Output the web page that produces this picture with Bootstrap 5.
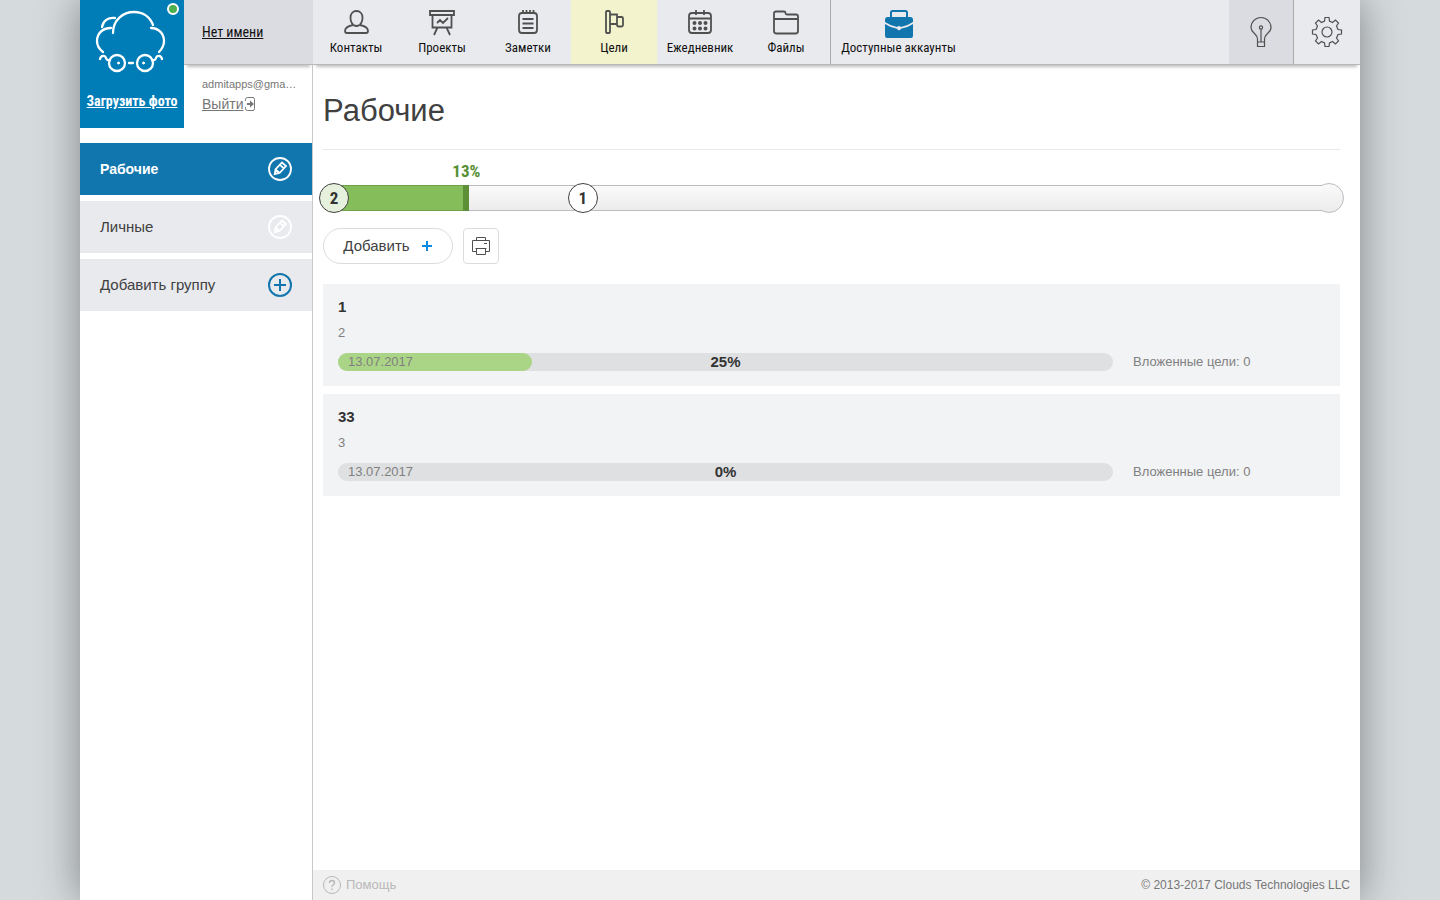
<!DOCTYPE html>
<html lang="ru">
<head>
<meta charset="utf-8">
<meta name="viewport" content="width=device-width, initial-scale=1">
<title>Цели</title>
<link href="https://cdn.jsdelivr.net/npm/bootstrap@5.3.0/dist/css/bootstrap.min.css" rel="stylesheet">
<style>
  :root { --brand: #1276ae; --cond: "Roboto Condensed", "Liberation Sans Narrow", "Liberation Sans", sans-serif; }
  body { background: #d5dadd; font: 13px/20px "Liberation Sans", Arial, sans-serif; color: #404040; }
  svg { display: block; fill: none; stroke: #505050; }
  .shell { max-width: 1280px; box-shadow: 0 0 40px rgba(0,0,0,.4); }
  .side { width: 233px; border-right: 1px solid #c8c8ca; }
  .topbar { height: 65px; border-bottom: 1px solid #b8b8ba; box-shadow: 0 5px 3px -3px rgba(0,0,0,.25); background: #e9eaee; position: relative; }
  .topbar-user { background: #dbdce1; padding-left: 18px; margin-right: -1px; }
  .condensed { font-family: var(--cond); }
  .user-name { color: #111; font-size: 14px; }
  .user-col { min-width: 0; }
  .avatar-box { width: 104px; height: 128px; background: #007cb7; z-index: 2; }
  .avatar-box svg { stroke: #fff; }
  .avatar-box a { color: #fff; font: bold 14px/16px var(--cond); white-space: nowrap; }
  .online { width: 12px; height: 12px; right: 5px; top: 3px; background: #4caf50; border: 2px solid #fff; }
  .user-info { padding: 9px 14px 0 18px; color: #777; }
  .user-mail { font-size: 11px; white-space: nowrap; }
  .user-info a { color: #777; font-size: 14px; }
  .groups { margin-top: 15px; gap: 6px; }
  .group-row { height: 52px; padding: 0 20px; background: #e9eaee; color: #404040; font-size: 15px; text-decoration: none; border: 0; }
  .group-row.current { background: var(--brand); color: #fff; font-weight: bold; font-size: 14px; }
  .nav-tile { width: 86px; padding-top: 7px; color: #111; font: 13px/16px var(--cond); text-decoration: none; gap: 3px; white-space: nowrap; }
  .nav-tile.current { background: #f3f3cd; }
  .nav-tile.wide { width: 136px; margin-left: 1px; border-left: 1px solid #aaabad; }
  .tool-btn { width: 66px; border: 0; background: transparent; padding: 0; }
  .tool-btn.shade { width: 65px; background: #dbdce1; border-right: 1px solid #aaabad; }
  .content-pad { padding: 0 20px 0 10px; }
  h1 { font-size: 31px; line-height: 40px; padding: 26px 0 18px; margin: 0; border-bottom: 1px solid #e8e8e8; }
  .track-wrap { padding: 35px 11px 0; }
  .track { height: 26px; border: solid #babcc2; border-width: 1px 0; background: linear-gradient(#fafafa, #ececec); }
  .track-fill { height: 26px; top: -1px; left: 0; background: #85bd5b; border: solid #6fa348; border-width: 1px 0; }
  .track-fill::after { content: ""; position: absolute; top: -1px; bottom: -1px; left: 100%; width: 6px; background: #5c8f36; }
  .track-fill span { position: absolute; left: 100%; top: -25px; width: 50px; margin-left: -22px; text-align: center; color: #568f33; font: bold 17px/20px var(--cond); }
  .mark-dot { width: 30px; height: 30px; top: 12px; border: 1px solid #404040; background: #fff; font: bold 17px/1 var(--cond); color: #333; }
  .mark-dot.done { background: #e5f1dc; }
  .mark-dot.finish { border-color: #babcc2; background: linear-gradient(#fafafa, #ececec); clip-path: inset(0 0 0 8px); }
  .actions { gap: 10px; margin: 17px 0 20px; }
  .add-btn { width: 130px; height: 36px; border: 1px solid #dcdcdc; background: #fff; color: #404040; font-size: 15px; gap: 11px; padding: 0; }
  .print-btn { width: 36px; height: 36px; border: 1px solid #dcdcdc; border-radius: 4px; background: #fff; padding: 0; }
  .goal { background: #f2f3f5; padding: 13px 15px 15px; color: #808080; }
  .goal h2 { font: bold 15px/20px "Liberation Sans", sans-serif; color: #333; margin: 0 0 6px; }
  .goal p { margin: 0 0 10px; }
  .goal-line { gap: 20px; }
  .goal-bar { height: 18px; line-height: 18px; background: #dfe0e2; }
  .goal-fill { background: #abd586; }
  .goal-date { left: 10px; }
  .goal-pct { color: #333; font: bold 15px/20px "Liberation Sans", sans-serif; }
  .nested { width: 192px; line-height: 18px; }
  .foot { height: 30px; background: #f0f0f0; padding: 0 10px; color: #777; font-size: 12px; }
  .foot a { color: #b8b8b8; gap: 5px; text-decoration: none; font-size: 13px; }
  .foot svg { stroke: #b8b8b8; }
  .ico-white { stroke: #fff; }
  .ico-brand { stroke: var(--brand); }
  .ico-blue { stroke: #0b8ae0; }
  .ico-exit { stroke: #777; margin-left: 1px; }
</style>
</head>
<body>
<div class="shell mx-auto bg-white d-flex min-vh-100">
  <aside class="side flex-shrink-0">
    <div class="d-flex">
      <div class="avatar-box position-relative flex-shrink-0">
        <svg width="104" height="93" viewBox="0 0 104 93" stroke-width="2.300" stroke-linecap="round">
          <path d="M33 33C33 20 43 12 54 12c9 0 16 5 19 13M35 18C28 17 23 21 22 27M31 28C22 28 17 34 17 41c0 5 2 8 6 11M71 28C79 28 84 34 84 41c0 5-2 8-5 11"/>
          <circle cx="37" cy="63" r="8"/><circle cx="65" cy="63" r="8"/>
          <path d="M49 63h4M20 59c1-4 5-4 6-1q1 3 4 2M82 59c-1-4-5-4-6-1q-1 3-4 2"/>
          <circle cx="38.500" cy="63" r="1" fill="#fff" stroke-width="1"/><circle cx="63.500" cy="63" r="1" fill="#fff" stroke-width="1"/>
        </svg>
        <a href="#" class="d-block text-center">Загрузить фото</a>
        <span class="online position-absolute rounded-circle"></span>
      </div>
      <div class="user-col flex-grow-1">
        <div class="topbar topbar-user d-flex align-items-center"><a href="#" class="user-name condensed">Нет имени</a></div>
        <div class="user-info">
          <div class="user-mail">admitapps@gma…</div>
          <div class="d-flex align-items-center"><a href="#">Выйти</a>
            <svg class="ico-exit" width="12" height="14" viewBox="0 0 12 14"><path d="M1.500 4V2.500Q1.500.500 3.500.500H9Q10.500.500 10.500 2.500V11.500Q10.500 13.500 9 13.500H3.500Q1.500 13.500 1.500 11.500V10"/><path d="M3 6h3V3.500L10 7l-4 3.500V8H3z" fill="#777" stroke="none"/></svg>
          </div>
        </div>
      </div>
    </div>
    <nav class="groups d-flex flex-column">
      <a href="#" class="group-row current d-flex align-items-center justify-content-between">Рабочие
        <svg class="ico-white" width="24" height="24" viewBox="0 0 24 24" stroke-width="1.800"><circle cx="12" cy="12" r="11"/><path d="M6.800 17l.7-4.500 6.500-7 4 3.500-6.500 7zM12 7.800l3.800 3.500M7.500 12.500l4 3.500"/></svg></a>
      <a href="#" class="group-row d-flex align-items-center justify-content-between">Личные
        <svg class="ico-white" width="24" height="24" viewBox="0 0 24 24" stroke-width="1.800"><circle cx="12" cy="12" r="11"/><path d="M6.800 17l.7-4.500 6.500-7 4 3.500-6.500 7zM12 7.800l3.800 3.500M7.500 12.500l4 3.500"/></svg></a>
      <button class="group-row d-flex align-items-center justify-content-between">Добавить группу
        <svg class="ico-brand" width="24" height="24" viewBox="0 0 24 24" stroke-width="2"><circle cx="12" cy="12" r="11"/><path d="M12 6v12M6 12h12"/></svg></button>
    </nav>
  </aside>

  <div class="d-flex flex-column flex-grow-1">
    <header class="topbar d-flex">
      <a href="#" class="nav-tile d-flex flex-column align-items-center">
        <svg width="30" height="30" viewBox="0 0 30 30" stroke-width="1.800"><path d="M18.500 18c1.800-1.500 3-4.300 3-7.500C21.500 6.500 19 4 15.500 4s-6 2.500-6 6.500c0 3.200 1.200 6 3 7.500M12.500 18c-5 .8-8.500 2.500-8.500 6 0 1.200.7 2 2 2h19c1.300 0 2-.8 2-2 0-3.500-3.500-5.200-8.500-6"/><path d="M12.500 18q3 2 6 0"/></svg>Контакты</a>
      <a href="#" class="nav-tile d-flex flex-column align-items-center">
        <svg width="30" height="30" viewBox="0 0 30 30" stroke-width="1.800"><path d="M3 4h24v4H3zM5.500 8v12.500h19V8M10.500 20.500L7 28M19.500 20.500L23 28M10 16l3-3 3 3 5-5"/></svg>Проекты</a>
      <a href="#" class="nav-tile d-flex flex-column align-items-center">
        <svg width="30" height="30" viewBox="0 0 30 30" stroke-width="1.800"><rect x="6" y="6" width="18" height="20" rx="3"/><path d="M10 3v4M13.500 3v4M17 3v4M20.500 3v4M9.500 12h11M9.500 16.500h11M9.500 21h11"/></svg>Заметки</a>
      <a href="#" class="nav-tile current d-flex flex-column align-items-center" aria-current="page">
        <svg width="30" height="30" viewBox="0 0 30 30" stroke-width="1.800"><rect x="7" y="4" width="4" height="22" rx="1"/><path d="M11 7.500h7v9.500H11M18 10h4.500q1.500 0 1.500 1.500V18q0 1.500-1.500 1.500h-3q-1.500 0-1.500-2"/></svg>Цели</a>
      <a href="#" class="nav-tile d-flex flex-column align-items-center">
        <svg width="30" height="30" viewBox="0 0 30 30" stroke-width="1.800"><rect x="4" y="6" width="22" height="20" rx="3"/><path d="M4 11.500h22M11 3v5M19 3v5"/><path d="M9.500 16h.01M15 16h.01M20.500 16h.01M9.500 21.500h.01M15 21.500h.01M20.500 21.500h.01" stroke-width="4" stroke-linecap="round"/></svg>Ежедневник</a>
      <a href="#" class="nav-tile d-flex flex-column align-items-center">
        <svg width="30" height="30" viewBox="0 0 30 30" stroke-width="1.800"><path d="M3 24V6.500Q3 4.500 5 4.500h8q1.500 0 1.500 1.500t1.500 1.500h9q2 0 2 2V24q0 2.500-2.500 2.500h-19Q3 26.500 3 24zM3 12h24"/></svg>Файлы</a>
      <a href="#" class="nav-tile wide d-flex flex-column align-items-center">
        <svg class="overflow-visible" width="30" height="30" viewBox="0 0 30 30"><path class="ico-brand" d="M7 11V5.500Q7 4 8.500 4h13Q23 4 23 5.500V11" stroke-width="2"/><path d="M1 13q0-3 2.500-3h23q2.500 0 2.500 3v2q-6 4-12 5-2-2-4 0-6-1-12-5zM1 17q6 4 12 4.800 2 3 4 0 6-.800 12-4.800v11.500q0 2.500-2 2.500H3q-2 0-2-2.500z" fill="#1276ae" stroke="none"/></svg>Доступные аккаунты</a>
      <button class="tool-btn shade ms-auto d-flex align-items-center justify-content-center" aria-label="Подсказки">
        <svg width="24" height="32" viewBox="0 0 24 32" stroke-width="1.200"><path d="M8.500 26v-3c0-3-1.500-4-3.500-6C3 15.200 2 13.500 2 11.500 2 6 6.500 1.500 12 1.500S22 6 22 11.500c0 2-1 3.700-3 5.500-2 2-3.500 3-3.500 6v3M8.500 26h7v4.500h-7zM12 13v13"/><circle cx="12" cy="11.500" r="1.600"/></svg></button>
      <button class="tool-btn d-flex align-items-center justify-content-center" aria-label="Настройки">
        <svg width="32" height="32" viewBox="-16 -16 32 32" stroke-width="1.200"><circle r="5"/><path d="M-2-14.500H2L2.500-11 5.500-9.500 8.500-12 11.500-9 9.500-6 11-2.500 14.500-2V2L11 2.500 9.500 6 11.500 9 8.500 12 5.500 9.500 2.500 11 2 14.500H-2L-2.500 11-5.500 9.500-8.500 12-11.500 9-9.500 6-11 2.500-14.500 2V-2L-11-2.500-9.500-6-11.500-9-8.500-12-5.500-9.500-2.500-11z"/></svg></button>
    </header>

    <main class="content-pad flex-grow-1">
      <h1 class="fw-normal">Рабочие</h1>
      <div class="track-wrap">
        <div class="track position-relative">
          <span class="mark-dot finish position-absolute translate-middle rounded-circle" style="left:100%"></span>
          <div class="track-fill position-absolute" style="width:13%"><span>13%</span></div>
          <span class="mark-dot done position-absolute translate-middle rounded-circle d-flex align-items-center justify-content-center" style="left:0%">2</span>
          <span class="mark-dot position-absolute translate-middle rounded-circle d-flex align-items-center justify-content-center" style="left:25%">1</span>
        </div>
      </div>
      <div class="actions d-flex">
        <button class="add-btn rounded-pill d-flex align-items-center justify-content-center">Добавить
          <svg class="ico-blue" width="12" height="12" viewBox="0 0 12 12" stroke-width="2"><path d="M6 1v10M1 6h10"/></svg></button>
        <button class="print-btn d-flex align-items-center justify-content-center" aria-label="Печать">
          <svg width="20" height="20" viewBox="0 0 20 20"><path d="M5.500 4.500V1.500h9v3M5 15.500H1.500v-11h17v11H15M4.500 12.500h11M5.500 12.500v6h9v-6M13 7.500h3"/></svg></button>
      </div>
      <div class="d-grid gap-2">
        <article class="goal">
          <h2>1</h2><p>2</p>
          <div class="goal-line d-flex">
            <div class="goal-bar position-relative rounded-pill flex-grow-1 d-flex align-items-center justify-content-center">
              <div class="goal-fill position-absolute start-0 h-100 rounded-pill" style="width:25%"></div>
              <span class="goal-date position-absolute">13.07.2017</span><span class="goal-pct position-relative">25%</span>
            </div>
            <div class="nested">Вложенные цели: 0</div>
          </div>
        </article>
        <article class="goal">
          <h2>33</h2><p>3</p>
          <div class="goal-line d-flex">
            <div class="goal-bar position-relative rounded-pill flex-grow-1 d-flex align-items-center justify-content-center">
              <span class="goal-date position-absolute">13.07.2017</span><span class="goal-pct position-relative">0%</span>
            </div>
            <div class="nested">Вложенные цели: 0</div>
          </div>
        </article>
      </div>
    </main>

    <footer class="foot d-flex align-items-center justify-content-between">
      <a href="#" class="d-flex align-items-center">
        <svg width="18" height="18" viewBox="0 0 18 18"><circle cx="9" cy="9" r="8.500"/><path d="M6.500 7q0-2.500 2.500-2.500T11.500 7Q11.500 8 10 9T9 11M9 12.500v1.500" stroke-width="1.500"/></svg>Помощь</a>
      <span>© 2013-2017 Clouds Technologies LLC</span>
    </footer>
  </div>
</div>
<script src="https://cdn.jsdelivr.net/npm/bootstrap@5.3.0/dist/js/bootstrap.bundle.min.js"></script>
</body>
</html>
